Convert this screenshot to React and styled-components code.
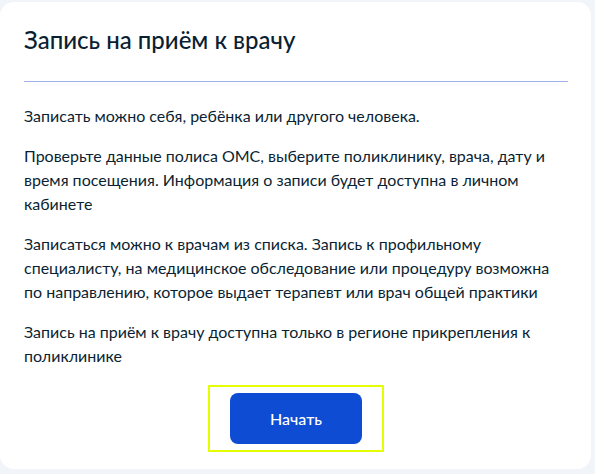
import React from "react";
import styled, { createGlobalStyle } from "styled-components";

const Global = createGlobalStyle`
  html, body { margin: 0; padding: 0; background: #f1f4f9; }
  body { font-family: Lato, "Noto Sans", sans-serif; color: #0b1f33; }
`;

const Page = styled.div`
  width: 595px;
  height: 474px;
  padding-top: 2px;
  box-sizing: border-box;
  background: #f1f4f9;
`;

const Card = styled.section`
  width: 591px;
  height: 467px;
  box-sizing: border-box;
  background: #fff;
  border-radius: 14px;
  padding: 22px 23px 16px 24px;
  display: flex;
  flex-direction: column;
`;

const Title = styled.h1`
  margin: 0;
  font-size: 24px;
  line-height: 32px;
  font-weight: 500;
  color: #0b1f33;
`;

const Divider = styled.hr`
  margin: 25px 0 22px;
  border: none;
  height: 1px;
  background: #9fb0ea;
`;

const Text = styled.p`
  margin: 0 0 16px;
  font-size: 16px;
  line-height: 24px;
  color: #0b1f33;
`;

const Actions = styled.div`
  display: flex;
  justify-content: center;
  margin-top: 1px;
`;

const Focus = styled.div`
  border: 2px solid #e6ff00;
  padding: 6px 20px;
`;

const Button = styled.button`
  display: block;
  width: 132px;
  height: 51px;
  border: none;
  border-radius: 8px;
  background: #0d4cd3;
  color: #fff;
  font-family: Lato, "Noto Sans", sans-serif;
  font-size: 16px;
  font-weight: 500;
  cursor: pointer;
`;

export default function App() {
  return (
    <Page>
      <Global />
      <Card>
        <Title>Запись на приём к врачу</Title>
        <Divider />
        <Text>Записать можно себя, ребёнка или другого человека.</Text>
        <Text>
          Проверьте данные полиса ОМС, выберите поликлинику, врача, дату и время
          посещения. Информация о записи будет доступна в личном кабинете
        </Text>
        <Text>
          Записаться можно к врачам из списка. Запись к профильному
          <br />
          специалисту, на медицинское обследование или процедуру возможна по
          направлению, которое выдает терапевт или врач общей практики
        </Text>
        <Text>
          Запись на приём к врачу доступна только в регионе прикрепления к
          поликлинике
        </Text>
        <Actions>
          <Focus>
            <Button>Начать</Button>
          </Focus>
        </Actions>
      </Card>
    </Page>
  );
}
